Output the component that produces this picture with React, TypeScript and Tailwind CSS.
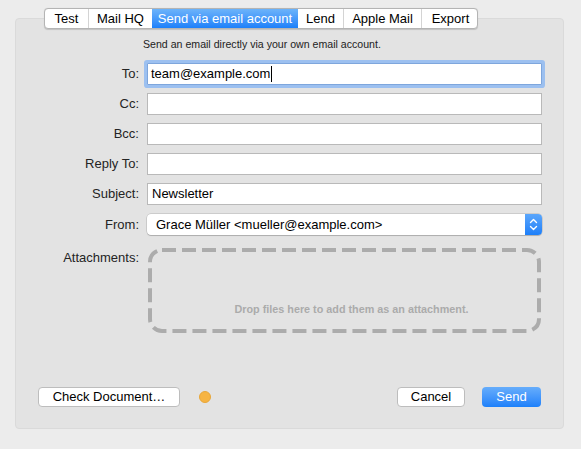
import React from 'react';

const tabs = ['Test', 'Mail HQ', 'Send via email account', 'Lend', 'Apple Mail', 'Export'];
const tabWidths = ['w-[44px]', 'w-[63px]', 'w-[146px]', 'w-[46px]', 'w-[78px]', 'w-[57px]'];

function Row({ label, children }: { label: string; children: React.ReactNode }) {
  return (
    <div className="flex items-center h-[22px]">
      <div className="w-[123px] text-right text-[13px] text-[#242424]">{label}</div>
      <div className="ml-[8px] w-[395px] h-full">{children}</div>
    </div>
  );
}

function TextBox({ value }: { value?: string }) {
  return (
    <div className="h-full w-full bg-white border border-[#b9b9b9] px-[4px] flex items-center text-[13px] text-black">
      {value}
    </div>
  );
}

export default function App() {
  return (
    <div
      className="w-[581px] h-[449px] bg-[#ececec] pt-[8px] overflow-hidden"
      style={{ fontFamily: '"Liberation Sans", Arial, sans-serif' }}
    >
      {/* segmented tab control */}
      <div className="relative z-10 ml-[44px] flex w-[434px] h-[21px] bg-white border border-[#b4b4b4] rounded-[4px] shadow-[0_0.5px_1px_rgba(0,0,0,0.15)] overflow-hidden text-[13px] text-black">
        {tabs.map((t, i) => (
          <div
            key={t}
            className={
              tabWidths[i] +
              ' flex items-center justify-center shrink-0 ' +
              (i === 2
                ? 'bg-gradient-to-b from-[#6cb3fa] to-[#1b80fa] text-white'
                : i < tabs.length - 1 && i !== 1
                ? 'border-r border-[#d4d4d4]'
                : '')
            }
          >
            {t}
          </div>
        ))}
      </div>

      {/* panel */}
      <div className="-mt-[11px] ml-[15px] w-[549px] h-[411px] bg-[#e3e3e3] border border-[#dadada] rounded-[4px] flex flex-col">
        <div className="mt-[19px] h-[14px] flex items-center text-[10.6px] text-[#222] pl-[127px]">
          Send an email directly via your own email account.
        </div>

        <div className="mt-[11px] flex flex-col gap-[8px]">
          <Row label="To:">
            <div className="h-full w-full bg-white border border-[#7ea6dc] ring-[3px] ring-[#9cc0f0] rounded-[1px] px-[3px] flex items-center text-[13px] text-black">
              team@example.com
              <span className="ml-[1px] h-[16px] border-l border-black" />
            </div>
          </Row>
          <Row label="Cc:">
            <TextBox />
          </Row>
          <Row label="Bcc:">
            <TextBox />
          </Row>
          <Row label="Reply To:">
            <TextBox />
          </Row>
          <Row label="Subject:">
            <TextBox value="Newsletter" />
          </Row>
        </div>

        <div className="mt-[9px] flex items-center h-[21px]">
          <div className="w-[123px] text-right text-[13px] text-[#242424]">From:</div>
          <div className="ml-[8px] w-[395px] h-full flex bg-white rounded-[4px] shadow-[0_0_0_0.5px_rgba(0,0,0,0.2),0_1px_1px_rgba(0,0,0,0.15)] overflow-hidden">
            <div className="flex-1 flex items-center pl-[9px] text-[13px] text-black">
              Grace Müller &lt;mueller@example.com&gt;
            </div>
            <div className="w-[17px] h-full bg-gradient-to-b from-[#5aa6fb] to-[#1c7ff9] flex items-center justify-center">
              <svg width="9" height="13" viewBox="0 0 9 13" fill="none" stroke="white" strokeWidth="1.4" strokeLinecap="round" strokeLinejoin="round">
                <path d="M1.5 4.5 L4.5 1.5 L7.5 4.5" />
                <path d="M1.5 8.5 L4.5 11.5 L7.5 8.5" />
              </svg>
            </div>
          </div>
        </div>

        <div className="mt-[13px] flex">
          <div className="w-[123px] text-right text-[13px] text-[#242424]">Attachments:</div>
          <div className="ml-[9px] relative w-[393px] h-[85px] flex items-end justify-center pb-[16px] pl-[14px]">
            <svg className="absolute inset-0" width="393" height="85" viewBox="0 0 393 85" fill="none">
              <rect x="2" y="2" width="389" height="81" rx="12" stroke="#acacac" strokeWidth="4" strokeDasharray="14 6" />
            </svg>
            <span className="relative text-[10.8px] font-bold text-[#ababab]">
              Drop files here to add them as an attachment.
            </span>
          </div>
        </div>

        <div className="mt-auto mb-[21px] flex items-center h-[20px]">
          <button className="ml-[22px] w-[142px] h-[20px] bg-white border border-[#bdbdbd] rounded-[4px] text-[13px] text-black flex items-center justify-center">
            Check Document…
          </button>
          <span className="ml-[19px] w-[12px] h-[12px] rounded-full bg-[#f6b443] border border-[#e8a73a]" />
          <button className="ml-auto w-[68px] h-[20px] bg-white border border-[#bdbdbd] rounded-[4px] text-[13px] text-black flex items-center justify-center">
            Cancel
          </button>
          <button className="ml-[17px] mr-[22px] w-[59px] h-[20px] rounded-[4px] bg-gradient-to-b from-[#66adfb] to-[#1b80fa] text-[13px] text-white flex items-center justify-center">
            Send
          </button>
        </div>
      </div>
    </div>
  );
}
